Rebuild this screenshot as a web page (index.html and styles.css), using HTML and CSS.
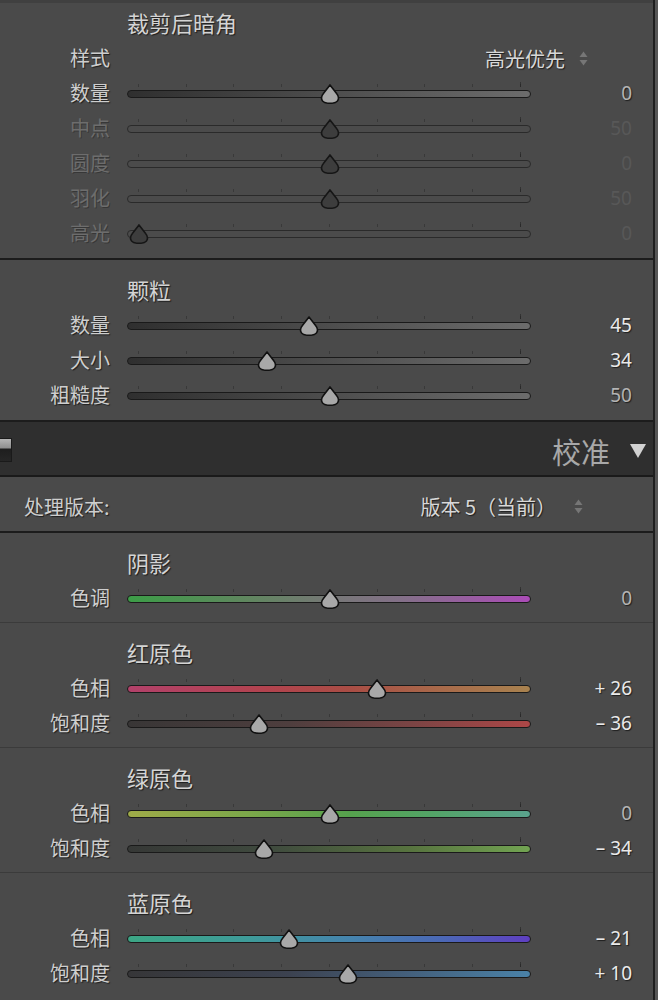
FILE: index.html
```html
<!DOCTYPE html>
<html lang="zh">
<head>
<meta charset="utf-8">
<title>Lightroom Panel</title>
<link rel="stylesheet" href="styles.css">
</head>
<body>
<div class="panel">

  <section class="sec sec-first">
    <div class="sec-title">裁剪后暗角</div>
    <div class="row">
      <div class="lbl">样式</div>
      <div class="select">
        <span class="select-text">高光优先</span>
        <svg class="updown" width="9" height="15" viewBox="0 0 9 15"><polygon points="4.5,0.5 8.5,6 0.5,6"/><polygon points="0.5,9 8.5,9 4.5,14.5"/></svg>
      </div>
    </div>
    <div class="row">
      <div class="lbl">数量</div>
      <div class="slider"><div class="ticks"></div><div class="track t-gray"></div><svg class="thumb" style="left:193px" viewBox="0 0 20 20"><path d="M10 1 L16.6 9.6 C18.8 12.2 18.9 15 17.4 16.9 C15.9 18.7 13 19.3 10 19.3 C7 19.3 4.1 18.7 2.6 16.9 C1.1 15 1.2 12.2 3.4 9.6 Z"/></svg></div>
      <div class="val def">0</div>
    </div>
    <div class="row off">
      <div class="lbl">中点</div>
      <div class="slider"><div class="ticks"></div><div class="track t-off"></div><svg class="thumb" style="left:193px" viewBox="0 0 20 20"><path d="M10 1 L16.6 9.6 C18.8 12.2 18.9 15 17.4 16.9 C15.9 18.7 13 19.3 10 19.3 C7 19.3 4.1 18.7 2.6 16.9 C1.1 15 1.2 12.2 3.4 9.6 Z"/></svg></div>
      <div class="val">50</div>
    </div>
    <div class="row off">
      <div class="lbl">圆度</div>
      <div class="slider"><div class="ticks"></div><div class="track t-off"></div><svg class="thumb" style="left:193px" viewBox="0 0 20 20"><path d="M10 1 L16.6 9.6 C18.8 12.2 18.9 15 17.4 16.9 C15.9 18.7 13 19.3 10 19.3 C7 19.3 4.1 18.7 2.6 16.9 C1.1 15 1.2 12.2 3.4 9.6 Z"/></svg></div>
      <div class="val">0</div>
    </div>
    <div class="row off">
      <div class="lbl">羽化</div>
      <div class="slider"><div class="ticks"></div><div class="track t-off"></div><svg class="thumb" style="left:193px" viewBox="0 0 20 20"><path d="M10 1 L16.6 9.6 C18.8 12.2 18.9 15 17.4 16.9 C15.9 18.7 13 19.3 10 19.3 C7 19.3 4.1 18.7 2.6 16.9 C1.1 15 1.2 12.2 3.4 9.6 Z"/></svg></div>
      <div class="val">50</div>
    </div>
    <div class="row off">
      <div class="lbl">高光</div>
      <div class="slider"><div class="ticks"></div><div class="track t-off"></div><svg class="thumb" style="left:2px" viewBox="0 0 20 20"><path d="M10 1 L16.6 9.6 C18.8 12.2 18.9 15 17.4 16.9 C15.9 18.7 13 19.3 10 19.3 C7 19.3 4.1 18.7 2.6 16.9 C1.1 15 1.2 12.2 3.4 9.6 Z"/></svg></div>
      <div class="val">0</div>
    </div>
  </section>

  <section class="sec">
    <div class="sec-title">颗粒</div>
    <div class="row">
      <div class="lbl">数量</div>
      <div class="slider"><div class="ticks"></div><div class="track t-gray"></div><svg class="thumb" style="left:172px" viewBox="0 0 20 20"><path d="M10 1 L16.6 9.6 C18.8 12.2 18.9 15 17.4 16.9 C15.9 18.7 13 19.3 10 19.3 C7 19.3 4.1 18.7 2.6 16.9 C1.1 15 1.2 12.2 3.4 9.6 Z"/></svg></div>
      <div class="val">45</div>
    </div>
    <div class="row">
      <div class="lbl">大小</div>
      <div class="slider"><div class="ticks"></div><div class="track t-gray"></div><svg class="thumb" style="left:130px" viewBox="0 0 20 20"><path d="M10 1 L16.6 9.6 C18.8 12.2 18.9 15 17.4 16.9 C15.9 18.7 13 19.3 10 19.3 C7 19.3 4.1 18.7 2.6 16.9 C1.1 15 1.2 12.2 3.4 9.6 Z"/></svg></div>
      <div class="val">34</div>
    </div>
    <div class="row">
      <div class="lbl">粗糙度</div>
      <div class="slider"><div class="ticks"></div><div class="track t-gray"></div><svg class="thumb" style="left:193px" viewBox="0 0 20 20"><path d="M10 1 L16.6 9.6 C18.8 12.2 18.9 15 17.4 16.9 C15.9 18.7 13 19.3 10 19.3 C7 19.3 4.1 18.7 2.6 16.9 C1.1 15 1.2 12.2 3.4 9.6 Z"/></svg></div>
      <div class="val def">50</div>
    </div>
  </section>

  <header class="hdr">
    <div class="toggle"></div>
    <div class="hdr-title">校准</div>
    <svg class="hdr-arrow" width="18" height="16" viewBox="0 0 18 16"><polygon points="1,1 17,1 9,15"/></svg>
  </header>

  <div class="process">
    <div class="process-lbl">处理版本:</div>
    <div class="process-val">
      <span>版本 5（当前）</span>
      <svg class="updown" width="9" height="15" viewBox="0 0 9 15"><polygon points="4.5,0.5 8.5,6 0.5,6"/><polygon points="0.5,9 8.5,9 4.5,14.5"/></svg>
    </div>
  </div>

  <div class="calib">
    <section class="csec">
      <div class="sec-title">阴影</div>
      <div class="row">
        <div class="lbl">色调</div>
        <div class="slider"><div class="ticks"></div><div class="track t-tint"></div><svg class="thumb" style="left:193px" viewBox="0 0 20 20"><path d="M10 1 L16.6 9.6 C18.8 12.2 18.9 15 17.4 16.9 C15.9 18.7 13 19.3 10 19.3 C7 19.3 4.1 18.7 2.6 16.9 C1.1 15 1.2 12.2 3.4 9.6 Z"/></svg></div>
        <div class="val def">0</div>
      </div>
    </section>
    <section class="csec">
      <div class="sec-title">红原色</div>
      <div class="row">
        <div class="lbl">色相</div>
        <div class="slider"><div class="ticks"></div><div class="track t-rh"></div><svg class="thumb" style="left:240px" viewBox="0 0 20 20"><path d="M10 1 L16.6 9.6 C18.8 12.2 18.9 15 17.4 16.9 C15.9 18.7 13 19.3 10 19.3 C7 19.3 4.1 18.7 2.6 16.9 C1.1 15 1.2 12.2 3.4 9.6 Z"/></svg></div>
        <div class="val">+ 26</div>
      </div>
      <div class="row">
        <div class="lbl">饱和度</div>
        <div class="slider"><div class="ticks"></div><div class="track t-rs"></div><svg class="thumb" style="left:122px" viewBox="0 0 20 20"><path d="M10 1 L16.6 9.6 C18.8 12.2 18.9 15 17.4 16.9 C15.9 18.7 13 19.3 10 19.3 C7 19.3 4.1 18.7 2.6 16.9 C1.1 15 1.2 12.2 3.4 9.6 Z"/></svg></div>
        <div class="val">– 36</div>
      </div>
    </section>
    <section class="csec">
      <div class="sec-title">绿原色</div>
      <div class="row">
        <div class="lbl">色相</div>
        <div class="slider"><div class="ticks"></div><div class="track t-gh"></div><svg class="thumb" style="left:193px" viewBox="0 0 20 20"><path d="M10 1 L16.6 9.6 C18.8 12.2 18.9 15 17.4 16.9 C15.9 18.7 13 19.3 10 19.3 C7 19.3 4.1 18.7 2.6 16.9 C1.1 15 1.2 12.2 3.4 9.6 Z"/></svg></div>
        <div class="val def">0</div>
      </div>
      <div class="row">
        <div class="lbl">饱和度</div>
        <div class="slider"><div class="ticks"></div><div class="track t-gs"></div><svg class="thumb" style="left:127px" viewBox="0 0 20 20"><path d="M10 1 L16.6 9.6 C18.8 12.2 18.9 15 17.4 16.9 C15.9 18.7 13 19.3 10 19.3 C7 19.3 4.1 18.7 2.6 16.9 C1.1 15 1.2 12.2 3.4 9.6 Z"/></svg></div>
        <div class="val">– 34</div>
      </div>
    </section>
    <section class="csec">
      <div class="sec-title">蓝原色</div>
      <div class="row">
        <div class="lbl">色相</div>
        <div class="slider"><div class="ticks"></div><div class="track t-bh"></div><svg class="thumb" style="left:152px" viewBox="0 0 20 20"><path d="M10 1 L16.6 9.6 C18.8 12.2 18.9 15 17.4 16.9 C15.9 18.7 13 19.3 10 19.3 C7 19.3 4.1 18.7 2.6 16.9 C1.1 15 1.2 12.2 3.4 9.6 Z"/></svg></div>
        <div class="val">– 21</div>
      </div>
      <div class="row">
        <div class="lbl">饱和度</div>
        <div class="slider"><div class="ticks"></div><div class="track t-bs"></div><svg class="thumb" style="left:211px" viewBox="0 0 20 20"><path d="M10 1 L16.6 9.6 C18.8 12.2 18.9 15 17.4 16.9 C15.9 18.7 13 19.3 10 19.3 C7 19.3 4.1 18.7 2.6 16.9 C1.1 15 1.2 12.2 3.4 9.6 Z"/></svg></div>
        <div class="val">+ 10</div>
      </div>
    </section>
  </div>

</div>
</body>
</html>
```

FILE: styles.css
```css
* { box-sizing: border-box; }

html, body {
  margin: 0;
  padding: 0;
}

body {
  width: 658px;
  height: 1000px;
  overflow: hidden;
  background: #565656;
  font-family: "Noto Sans CJK SC", "Noto Sans", sans-serif;
}

.panel {
  width: 655px;
  border-right: 2px solid #1f1f1f;
  background: #4a4a4a;
  min-height: 1000px;
}

.sec {
  padding: 11px 0 7px;
  border-bottom: 2px solid #1c1c1c;
}

.sec-first {
  padding-top: 1px;
  border-top: 3px solid #404040;
}

.sec-title {
  height: 37px;
  line-height: 37px;
  padding-left: 127px;
  font-size: 22px;
  color: #d4d4d4;
  text-shadow: 1px 1px 1px rgba(0, 0, 0, 0.6);
}

.row {
  height: 35px;
  display: grid;
  grid-template-columns: 127px 404px 101px;
  align-items: stretch;
}

.lbl {
  padding-right: 17px;
  text-align: right;
  font-size: 20px;
  line-height: 34px;
  color: #cecece;
  text-shadow: 1px 1px 1px rgba(0, 0, 0, 0.6);
  white-space: nowrap;
}

.row.off .lbl {
  color: #6d6d6d;
  text-shadow: 1px 1px 0 rgba(0, 0, 0, 0.25);
}

.select {
  grid-column: 2 / 4;
  display: flex;
  align-items: center;
  justify-content: flex-end;
  gap: 14px;
  padding-right: 44px;
  padding-bottom: 1px;
}

.select-text {
  font-size: 20px;
  color: #d8d8d8;
  text-shadow: 1px 1px 1px rgba(0, 0, 0, 0.6);
}

.updown {
  fill: #767676;
  display: block;
}

.slider {
  position: relative;
  display: flex;
  align-items: flex-start;
  padding-top: 14px;
}

.track {
  width: 100%;
  height: 8px;
  border-radius: 4px;
  border: 1.5px solid #1a1a1a;
}

.t-gray { background: linear-gradient(to right, #2f2f2f 0%, #4a4a4a 45%, #6c6c6c 100%); }
.t-off  { background: #4b4b4b; border-color: #2a2a2a; }
.t-tint { background: linear-gradient(to right, #3c9d47 0%, #60865f 30%, #767876 50%, #837088 68%, #ab4cb7 100%); }
.t-rh   { background: linear-gradient(to right, #b2416a 0%, #b2434e 35%, #a94d45 55%, #a86a4a 78%, #a8824f 100%); }
.t-rs   { background: linear-gradient(to right, #383636 0%, #4e3e3e 40%, #7a4444 70%, #ad4747 100%); }
.t-gh   { background: linear-gradient(to right, #9fab48 0%, #7ca84a 30%, #56a24d 55%, #53a466 75%, #5aa38d 100%); }
.t-gs   { background: linear-gradient(to right, #363836 0%, #3f4a3e 35%, #57733f 70%, #72a452 100%); }
.t-bh   { background: linear-gradient(to right, #3ca685 0%, #3e9b99 30%, #4584ad 55%, #4b68b5 78%, #5f3fc2 100%); }
.t-bs   { background: linear-gradient(to right, #363638 0%, #3c4250 40%, #44607c 70%, #4a82a8 100%); }

.ticks {
  position: absolute;
  left: 11px;
  top: 8px;
  width: 384px;
  height: 3px;
  background: repeating-linear-gradient(to right, rgba(25, 25, 25, 0.35) 0 1px, transparent 1px 47.75px);
}

.ticks::after {
  content: "";
  position: absolute;
  right: 1px;
  top: -2px;
  width: 1px;
  height: 5px;
  background: rgba(25, 25, 25, 0.45);
}

.thumb {
  position: absolute;
  top: 8px;
  width: 20px;
  height: 20px;
}

.thumb path {
  fill: #a8a8a8;
  stroke: #111;
  stroke-width: 1.6;
  stroke-linejoin: round;
}

.row.off .thumb path {
  fill: #3d3d3d;
  stroke: #161616;
}

.val {
  text-align: right;
  font-family: "Noto Sans", "Open Sans", sans-serif;
  font-size: 19px;
  line-height: 35px;
  color: #eaeaea;
  text-shadow: 1px 1px 1px rgba(0, 0, 0, 0.6);
  white-space: pre;
}

.val.def { color: #b4b4b4; }

.row.off .val {
  color: #585858;
  text-shadow: none;
}

.hdr {
  height: 55px;
  background: #2f2f2f;
  border-bottom: 2px solid #1a1a1a;
  display: flex;
  align-items: center;
  padding-right: 6px;
}

.toggle {
  width: 12px;
  height: 24px;
  margin-top: 2px;
  border: 1px solid #1a1a1a;
  border-left: none;
  background: linear-gradient(to bottom, #b5b5b5 0, #8f8f8f 9px, #1e1e1e 10px, #262626 100%);
}

.hdr-title {
  margin-left: auto;
  font-size: 29px;
  color: #a8a8a8;
  padding-top: 4px;
}

.hdr-arrow {
  margin-left: 19px;
  margin-top: 4px;
  fill: #d2d2d2;
}

.process {
  height: 56px;
  border-bottom: 2px solid #1c1c1c;
  display: flex;
  align-items: center;
  justify-content: space-between;
  padding: 5px 70px 0 24px;
}

.process-lbl {
  font-size: 20px;
  color: #cecece;
  text-shadow: 1px 1px 1px rgba(0, 0, 0, 0.6);
}

.process-val {
  display: flex;
  align-items: center;
  gap: 18px;
  font-size: 20px;
  color: #d8d8d8;
  text-shadow: 1px 1px 1px rgba(0, 0, 0, 0.6);
}

.csec {
  padding: 11px 0 6px;
}

.csec + .csec {
  border-top: 1px solid #3b3b3b;
}
```
